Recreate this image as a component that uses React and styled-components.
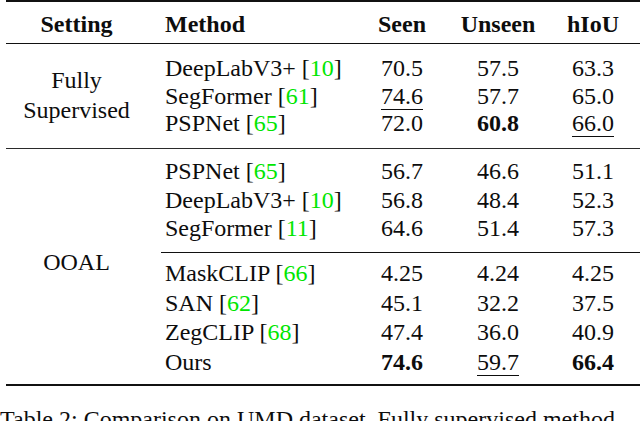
import React from 'react'
import styled, { createGlobalStyle } from 'styled-components'

const SERIF = '"Liberation Serif", Tinos, "Noto Serif", FreeSerif, "Nimbus Roman No9 L", "Times New Roman", serif'

const GlobalStyle = createGlobalStyle`
  html, body {
    margin: 0;
    padding: 0;
    background: #fff;
  }
  body {
    width: 640px;
    height: 421px;
    overflow: hidden;
    font-family: ${SERIF};
    color: #0d0d0d;
  }
`

const COLS = '207px 96px 96px 94px'

const rows = {
    fully: [
        { name: 'DeepLabV3+', cite: '10', seen: '70.5', unseen: '57.5', hiou: '63.3' },
        { name: 'SegFormer', cite: '61', seen: '74.6', unseen: '57.7', hiou: '65.0', u: ['seen'] },
        { name: 'PSPNet', cite: '65', seen: '72.0', unseen: '60.8', hiou: '66.0', b: ['unseen'], u: ['hiou'] },
    ],
    ooal: [
        { name: 'PSPNet', cite: '65', seen: '56.7', unseen: '46.6', hiou: '51.1' },
        { name: 'DeepLabV3+', cite: '10', seen: '56.8', unseen: '48.4', hiou: '52.3' },
        { name: 'SegFormer', cite: '11', seen: '64.6', unseen: '51.4', hiou: '57.3' },
    ],
    open: [
        { name: 'MaskCLIP', cite: '66', seen: '4.25', unseen: '4.24', hiou: '4.25' },
        { name: 'SAN', cite: '62', seen: '45.1', unseen: '32.2', hiou: '37.5' },
        { name: 'ZegCLIP', cite: '68', seen: '47.4', unseen: '36.0', hiou: '40.9' },
        { name: 'Ours', seen: '74.6', unseen: '59.7', hiou: '66.4', b: ['seen', 'hiou'], u: ['unseen'] },
    ],
}

const Row = ({ r, h }) => (
    <DataRow $h={h}>
        <MethodCell>
            {r.name}
            {r.cite && <> [<Cite>{r.cite}</Cite>]</>}
        </MethodCell>
        {['seen', 'unseen', 'hiou'].map(k => (
            <NumCell key={k} $bold={r.b?.includes(k)} $under={r.u?.includes(k)}>
                <span>{r[k]}</span>
            </NumCell>
        ))}
    </DataRow>
)

const App = () => {
    return (
        <>
            <GlobalStyle />
            <Table>
                <HeaderRow>
                    <HeadCell $center>Setting</HeadCell>
                    <HeadCell $pad>Method</HeadCell>
                    <HeadCell $center>Seen</HeadCell>
                    <HeadCell $center>Unseen</HeadCell>
                    <HeadCell $center>hIoU</HeadCell>
                </HeaderRow>

                <Section $ruled>
                    <SettingCell>Fully<br />Supervised</SettingCell>
                    <Group $top={11} $bottom={10}>
                        {rows.fully.map((r, i) => <Row key={i} r={r} h={27.6} />)}
                    </Group>
                </Section>

                <Section>
                    <SettingCell $lift={7}>OOAL</SettingCell>
                    <div>
                        <Group $top={8} $bottom={8.75}>
                            {rows.ooal.map((r, i) => <Row key={i} r={r} h={28.75} />)}
                        </Group>
                        <SubRule />
                        <Group $top={6.5} $bottom={6.5}>
                            {rows.open.map((r, i) => <Row key={i} r={r} h={29.5} />)}
                        </Group>
                    </div>
                </Section>
            </Table>
            <Caption>Table 2: Comparison on UMD dataset. Fully supervised method</Caption>
        </>
    )
}

export default App

const Table = styled.div`
    margin-left: 6px;
    width: 634px;
    border-top: 2px solid #111;
    border-bottom: 2px solid #111;
    font-family: ${SERIF};
    font-size: 24px;
`

const HeaderRow = styled.div`
    display: grid;
    grid-template-columns: 141px ${COLS};
    height: 38px;
    padding-top: 3px;
    line-height: 38px;
    font-weight: 700;
    border-bottom: 1px solid #111;
`

const HeadCell = styled.div`
    text-align: ${p => (p.$center ? 'center' : 'left')};
    padding-left: ${p => (p.$pad ? '18px' : '0')};
`

const Section = styled.div`
    display: grid;
    grid-template-columns: 141px 1fr;
    border-bottom: ${p => (p.$ruled ? '1px solid #2a2a2a' : 'none')};
`

const SettingCell = styled.div`
    display: flex;
    align-items: center;
    justify-content: center;
    text-align: center;
    line-height: 29.5px;
    padding-bottom: ${p => p.$lift || 0}px;
`

const Group = styled.div`
    padding: ${p => p.$top}px 0 ${p => p.$bottom}px;
`

const SubRule = styled.div`
    margin-left: 14px;
    height: 1px;
    background: #111;
`

const DataRow = styled.div`
    display: grid;
    grid-template-columns: ${COLS};
    height: ${p => p.$h}px;
    line-height: ${p => p.$h}px;
    white-space: nowrap;
`

const MethodCell = styled.div`
    padding-left: 18px;
`

const Cite = styled.span`
    color: #00e600;
`

const NumCell = styled.div`
    text-align: center;
    font-weight: ${p => (p.$bold ? 700 : 400)};

    span {
        text-decoration: ${p => (p.$under ? 'underline' : 'none')};
        text-decoration-thickness: 1px;
        text-underline-offset: 5px;
    }
`

const Caption = styled.div`
    margin-top: 19px;
    font-family: ${SERIF};
    font-size: 24px;
    line-height: 29.5px;
    white-space: nowrap;
    overflow: hidden;
`
